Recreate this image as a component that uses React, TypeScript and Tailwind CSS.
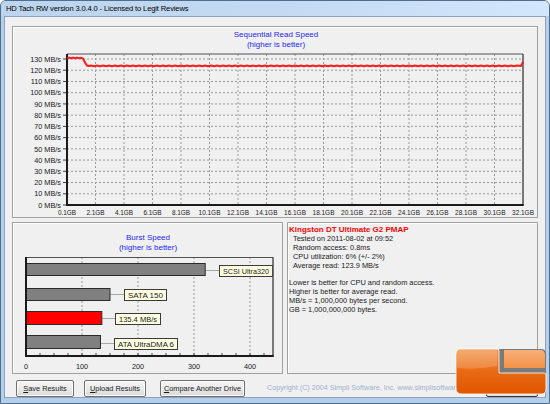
import React from "react";

const F = '"Liberation Sans", Arial, sans-serif';

function UpperChart() {
  const px0 = 54, px1 = 510, py0 = 27, py1 = 178;
  const yOf = (v: number) => py1 - v * 1.123;
  const xs = Array.from({ length: 17 }, (_, i) => px0 + i * 28.5);
  const vals = Array.from({ length: 14 }, (_, i) => i * 10);
  const pts: [number, number][] = [
    [54, 31.5], [56, 30.5], [58, 31.2], [60, 30.5], [62, 31.4], [64, 30.6], [66, 31.2], [68, 30.8], [70, 31.5], [72, 35.5], [74, 38.6], [76, 39],
  ];
  for (let x = 78; x <= 506; x += 3) pts.push([x, (x / 3) % 2 < 1 ? 38.6 : 39.3]);
  pts.push([508, 39], [509, 37], [510, 34.5]);
  const d = pts.map((p, i) => `${i ? "L" : "M"}${p[0]},${p[1]}`).join(" ");
  return (
    <svg width="524" height="190" className="block overflow-visible" style={{ fontFamily: F }}>
      <text x="263" y="10" fontSize="8" fill="#2626ff" textAnchor="middle">Sequential Read Speed</text>
      <text x="263" y="20" fontSize="8" fill="#2626ff" textAnchor="middle">(higher is better)</text>
      {vals.slice(1).map((v) => (
        <line key={"h" + v} x1={px0} x2={px1} y1={yOf(v)} y2={yOf(v)} stroke="#9a9a9a" strokeWidth="1" strokeDasharray="2 2" />
      ))}
      {xs.slice(1, 16).map((x) => (
        <line key={"v" + x} x1={x} x2={x} y1={py0} y2={py1} stroke="#9a9a9a" strokeWidth="1" strokeDasharray="2 2" />
      ))}
      {vals.map((v) => (
        <g key={"l" + v}>
          <line x1={px0 - 4} x2={px0} y1={yOf(v)} y2={yOf(v)} stroke="#404040" />
          <text x={px0 - 6} y={yOf(v) + 2.7} fontSize="7.3" fill="#202020" textAnchor="end">{v} MB/s</text>
        </g>
      ))}
      {xs.map((x, i) => {
        const s = `${(0.1 + i * 2).toFixed(1)}GB`;
        return (
          <text key={"x" + i} x={x} y="188" fontSize="7.2" fill="#202020" textAnchor="middle" textLength={s.length * 3.65} lengthAdjust="spacingAndGlyphs">{s}</text>
        );
      })}
      <line x1={px0} x2={px1} y1={py0} y2={py0} stroke="#505050" />
      <line x1={px1} x2={px1} y1={py0} y2={py1} stroke="#505050" strokeWidth="1.5" />
      <line x1={px0} x2={px0} y1={py0} y2={py1 + 1} stroke="#1a1a1a" strokeWidth="2" />
      <line x1={px0} x2={px1 + 0.75} y1={py1} y2={py1} stroke="#1a1a1a" strokeWidth="2" />
      <path d={d} fill="none" stroke="#ff1a1a" strokeWidth="2" />
    </svg>
  );
}

function BurstChart() {
  const x0 = 13, x1 = 260, y0 = 34, y1 = 133;
  const xOf = (v: number) => x0 + v * 0.56;
  const bars = [
    { v: 320, y: 40, h: 12, fill: "#808080", label: "SCSI Ultra320", lx: 206, lw: 53, ly: 42 },
    { v: 150, y: 65, h: 12, fill: "#808080", label: "SATA 150", lx: 111, lw: 42, ly: 66 },
    { v: 135.4, y: 88, h: 13, fill: "#ff0000", label: "135.4 MB/s", lx: 102, lw: 45, ly: 90 },
    { v: 133, y: 112, h: 13, fill: "#808080", label: "ATA UltraDMA 6", lx: 101, lw: 63, ly: 115 },
  ];
  return (
    <svg width="269" height="150" className="block" style={{ fontFamily: F }}>
      <text x="135" y="17" fontSize="8" fill="#2626ff" textAnchor="middle">Burst Speed</text>
      <text x="135" y="27" fontSize="8" fill="#2626ff" textAnchor="middle">(higher is better)</text>
      {[100, 200, 300, 400].map((v) => (
        <line key={v} x1={xOf(v)} x2={xOf(v)} y1={y0} y2={y1} stroke="#9a9a9a" strokeDasharray="2 2" />
      ))}
      {Array.from({ length: 18 }, (_, k) => (
        <line key={"t" + k} x1={x0 + k * 14} x2={x0 + k * 14} y1={y1 - 3} y2={y1} stroke="#404040" />
      ))}
      {bars.map((b) => (
        <g key={b.label}>
          <line x1={xOf(b.v)} x2={b.lx} y1={b.ly + 5.5} y2={b.ly + 5.5} stroke="#a8a8a8" />
          <rect x={x0} y={b.y + 0.5} width={xOf(b.v) - x0} height={b.h} fill={b.fill} stroke="#2a2a2a" strokeWidth="1" />
          <rect x={b.lx + 0.5} y={b.ly + 0.5} width={b.lw} height="11" fill="#ffffe1" stroke="#3a3a3a" />
          <text x={b.lx + 0.5 + b.lw / 2} y={b.ly + 9} fontSize="7.2" fill="#202020" textAnchor="middle" textLength={b.lw - 7} lengthAdjust="spacingAndGlyphs">{b.label}</text>
        </g>
      ))}
      {[0, 100, 200, 300, 400].map((v) => (
        <text key={"x" + v} x={xOf(v)} y="146" fontSize="7.3" fill="#202020" textAnchor="middle">{v}</text>
      ))}
      <line x1={x0} x2={x1} y1={y0 + 0.5} y2={y0 + 0.5} stroke="#505050" />
      <line x1={x1} x2={x1} y1={y0} y2={y1} stroke="#505050" strokeWidth="1.5" />
      <line x1={x0} x2={x0} y1={y0} y2={y1 + 1} stroke="#1a1a1a" strokeWidth="2" />
      <line x1={x0} x2={x1 + 0.75} y1={y1} y2={y1} stroke="#1a1a1a" strokeWidth="2" />
    </svg>
  );
}

function Btn({ first, rest, w }: { first: string; rest: string; w: string }) {
  return (
    <div
      className={`${w} h-[17px] flex items-center justify-center whitespace-nowrap rounded-[2px] border border-[#707070] bg-linear-to-b from-[#f4f4f4] via-[#ebebeb] to-[#d8d8d8] text-[7.4px] text-[#1a1a1a] shadow-[inset_0_0_0_1px_#fcfcfc]`}
      style={{ fontFamily: F }}
    >
      <span className="underline">{first}</span>
      <span>{rest}</span>
    </div>
  );
}

function Logo() {
  return (
    <svg width="96" height="52" className="absolute left-[452px] top-[345px]">
      <defs>
        <linearGradient id="big" x1="0" y1="0" x2="0" y2="1">
          <stop offset="0" stopColor="#f39a55" />
          <stop offset="0.45" stopColor="#ea6c15" />
          <stop offset="1" stopColor="#e05500" />
        </linearGradient>
        <linearGradient id="small" x1="0" y1="0" x2="0" y2="1">
          <stop offset="0" stopColor="#f8b079" />
          <stop offset="1" stopColor="#f39246" />
        </linearGradient>
      </defs>
      <path d="M46,3 H88 Q93,3 93,8 V31 H46 Z" fill="#7a7a7a" />
      <path
        d="M8,3 H44 Q46,3 46,5 V27 H91 Q93,27 93,29 V43 Q93,48 88,48 H9 Q3,48 3,42 V8 Q3,3 8,3 Z"
        fill="url(#big)"
        stroke="#ffffff"
        strokeWidth="0.8"
      />
      <path d="M8,4 H44 V20 Q25,24 4,22 V8 Q4,4 8,4 Z" fill="#ffffff" opacity="0.18" />
      <path d="M51,4 H87 Q92,4 92,9 V22 H51 Z" fill="url(#small)" />
    </svg>
  );
}

export default function App() {
  return (
    <div
      className="relative w-[550px] h-[404px] overflow-hidden rounded-t-[6px] border border-[#4f6d8e] bg-[#b5cfea] flex flex-col"
      style={{ fontFamily: F }}
    >
      <div className="h-[15px] shrink-0 flex items-center pl-[5px] bg-linear-to-r from-[#bcd4ed] via-[#c3daf2] to-[#d3e7fb] text-[7.6px] tracking-[-0.15px] text-black">
        HD Tach RW version 3.0.4.0 - Licensed to Legit Reviews
      </div>
      <div className="mx-[3px] flex-1 flex flex-col bg-[#f0f0f0] border border-[#8ba3be] pt-[9px] px-[7px]">
        <div className="h-[192px] shrink-0 border border-[#a0a0a0] shadow-[inset_1px_1px_0_#ffffff]">
          <UpperChart />
        </div>
        <div className="mt-[4px] h-[152px] shrink-0 flex gap-[4px]">
          <div className="w-[271px] shrink-0 border border-[#a0a0a0] shadow-[inset_1px_1px_0_#ffffff]">
            <BurstChart />
          </div>
          <div className="flex-1 border border-[#a0a0a0] shadow-[inset_1px_1px_0_#ffffff] pl-[1px] pt-[2px] text-[7.4px] leading-[9px] text-[#1a1a1a]">
            <div className="text-[8px] font-bold text-[#ff0000] leading-[9px]">Kingston DT Ultimate G2 PMAP</div>
            <div className="pl-[4px]">
              <div>Tested on 2011-08-02 at 09:52</div>
              <div>Random access: 0.8ms</div>
              <div>CPU utilization: 6% (+/- 2%)</div>
              <div>Average read: 123.9 MB/s</div>
            </div>
            <div className="mt-[8px]">
              <div>Lower is better for CPU and random access.</div>
              <div>Higher is better for average read.</div>
              <div>MB/s = 1,000,000 bytes per second.</div>
              <div>GB = 1,000,000,000 bytes.</div>
            </div>
          </div>
        </div>
        <div className="mt-[6px] h-[17px] flex items-center">
          <div className="ml-[4px]"><Btn first="S" rest="ave Results" w="w-[58px]" /></div>
          <div className="ml-[10px]"><Btn first="U" rest="pload Results" w="w-[62px]" /></div>
          <div className="ml-[14px]"><Btn first="C" rest="ompare Another Drive" w="w-[85px]" /></div>
          <div className="ml-[22px] text-[7.2px] text-[#9db0cc] whitespace-nowrap">
            Copyright (C) 2004 Simpli Software, Inc. www.simplisoftware.com
          </div>
          <div className="ml-auto w-[52px] h-[17px] shrink-0 rounded-[2px] border border-[#3c3c3c] bg-[#dcdcdc]" />
        </div>
      </div>
      <div className="h-[5px] shrink-0 bg-[#b5cfea]" />
      <Logo />
    </div>
  );
}
